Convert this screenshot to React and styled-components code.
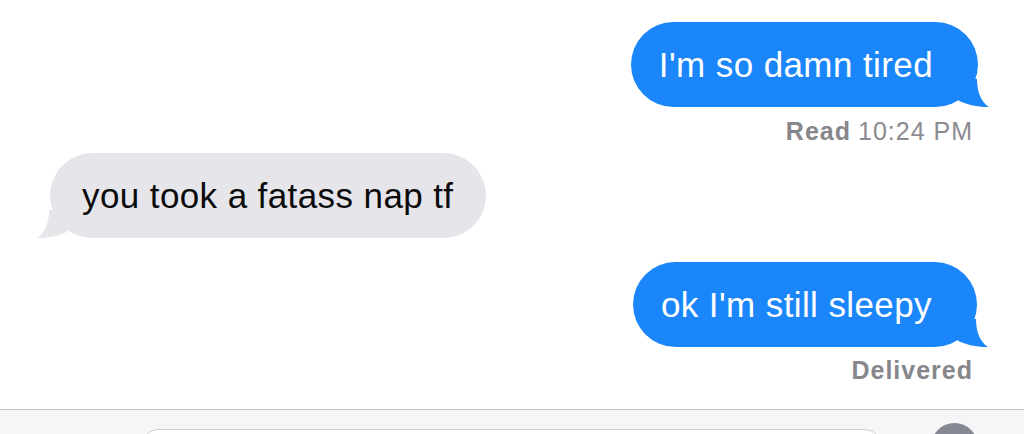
import React from "react";
import styled, { createGlobalStyle } from "styled-components";

const Global = createGlobalStyle`
  html, body { margin: 0; padding: 0; background: #ffffff; }
  body { font-family: "Liberation Sans", Arial, Helvetica, sans-serif; }
  #root { width: 1024px; height: 434px; overflow: hidden; }
`;

const Page = styled.div`
  width: 1024px;
  height: 434px;
  display: flex;
  flex-direction: column;
  background: #ffffff;
  overflow: hidden;
`;

const Thread = styled.div`
  flex: 1;
  display: flex;
  flex-direction: column;
  padding-top: 22px;
`;

const Row = styled.div`
  display: flex;
  justify-content: ${(p) => (p.$mine ? "flex-end" : "flex-start")};
  margin-top: ${(p) => p.$top || 0}px;
  padding: ${(p) => (p.$mine ? `0 ${p.$edge}px 0 0` : `0 0 0 ${p.$edge}px`)};
`;

const Bubble = styled.div`
  position: relative;
  height: 85px;
  line-height: 85px;
  border-radius: 42.5px;
  font-size: 35px;
  letter-spacing: 0.4px;
  white-space: nowrap;
  background: ${(p) => (p.$mine ? "#1a86f9" : "#e5e5ea")};
  color: ${(p) => (p.$mine ? "#ffffff" : "#0a0a0a")};
  padding: ${(p) => (p.$mine ? "0 45px 0 28px" : "0 32px 0 32px")};
`;

const Tail = styled.svg`
  position: absolute;
  bottom: 0;
  width: 30px;
  height: 28px;
  ${(p) =>
    p.$mine
      ? "right: -11px;"
      : "left: -13px; transform: scaleX(-1);"}
`;

const Status = styled.div`
  display: flex;
  justify-content: flex-end;
  padding-right: 51px;
  margin-top: ${(p) => p.$top || 0}px;
  font-size: 25px;
  line-height: 30px;
  letter-spacing: 1px;
  color: #8b8b90;
`;

const Strong = styled.span`
  font-weight: 700;
  color: #86868b;
  margin-right: ${(p) => p.$gap || 0}px;
`;

const Composer = styled.div`
  height: 24px;
  flex: none;
  display: flex;
  align-items: flex-start;
  border-top: 1px solid #c4c4c8;
  background: #f6f6f8;
  padding-left: 140px;
  overflow: hidden;
`;

const Field = styled.div`
  width: 743px;
  height: 38px;
  margin-top: 19px;
  box-sizing: border-box;
  border: 1px solid #cfcfd4;
  border-radius: 19px;
  background: #ffffff;
`;

const Mic = styled.div`
  width: 47px;
  height: 47px;
  margin-top: 13px;
  margin-left: 48px;
  border-radius: 50%;
  background: #868894;
`;

function BubbleTail({ mine, color }) {
  return (
    <Tail $mine={mine} viewBox="0 0 30 28">
      <path
        d="M8 0 L18 0 C18 13 22 23 30 28 C23 28.6 10 26.5 0 22 L0 8 Z"
        fill={color}
      />
    </Tail>
  );
}

function Message({ mine, text, top, edge }) {
  return (
    <Row $mine={mine} $top={top} $edge={edge}>
      <Bubble $mine={mine}>
        {text}
        <BubbleTail mine={mine} color={mine ? "#1a86f9" : "#e5e5ea"} />
      </Bubble>
    </Row>
  );
}

export default function App() {
  return (
    <>
      <Global />
      <Page>
        <Thread>
          <Message mine text="I'm so damn tired" edge={46} />
          <Status $top={9}>
            <Strong $gap={7}>Read</Strong>10:24 PM
          </Status>
          <Message text="you took a fatass nap tf" top={7} edge={50} />
          <Message mine text="ok I'm still sleepy" top={24} edge={47} />
          <Status $top={8}>
            <Strong>Delivered</Strong>
          </Status>
        </Thread>
        <Composer>
          <Field />
          <Mic />
        </Composer>
      </Page>
    </>
  );
}
